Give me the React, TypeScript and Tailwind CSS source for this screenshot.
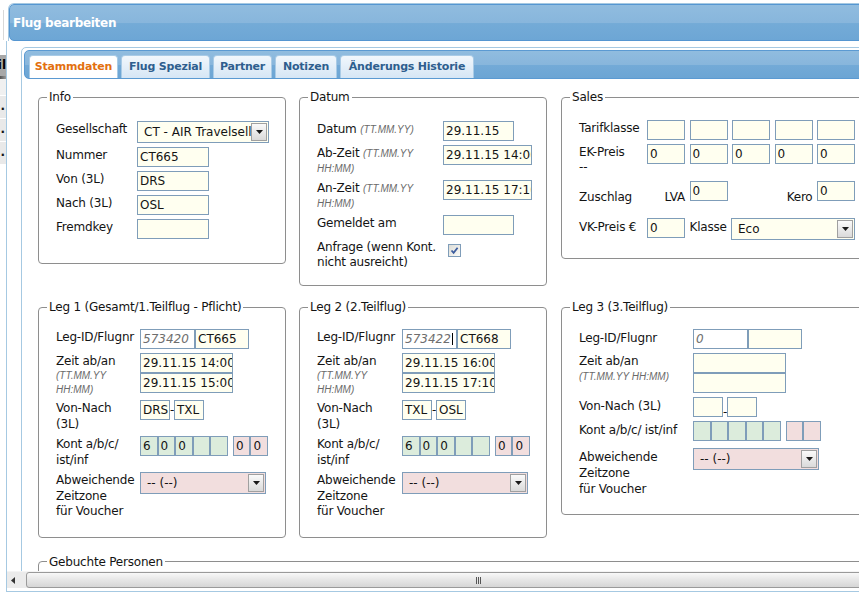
import React from "react";

const ivory = "bg-[#fffff0]";
const green = "bg-[#dcecdc]";
const rose = "bg-[#f2dede]";

function Field({ value = "", className = "" }: { value?: React.ReactNode; className?: string }) {
  return (
    <div
      className={`h-[20px] shrink-0 overflow-hidden whitespace-nowrap border border-[#7f9db9] px-[2px] leading-[18px] ${className}`}
    >
      {value}
    </div>
  );
}

function Dropdown({ value, className = "" }: { value: string; className?: string }) {
  return (
    <div className={`flex h-[22px] shrink-0 border border-[#7f9db9] ${className}`}>
      <div className="min-w-0 flex-1 overflow-hidden whitespace-nowrap pl-[6px] leading-[20px]">{value}</div>
      <div className="my-[1px] mr-[1px] flex w-[16px] shrink-0 items-center justify-center border border-[#a0a0a0] bg-[linear-gradient(to_bottom,#fafafa,#dadada)]">
        <svg width="7" height="4" viewBox="0 0 7 4">
          <path d="M0 0h7L3.5 4z" fill="#1a1a1a" />
        </svg>
      </div>
    </div>
  );
}

function Hint({ children }: { children: React.ReactNode }) {
  return (
    <span className="font-['Liberation_Sans',sans-serif] text-[10px] italic tracking-normal text-[#6a6a6a]">
      {children}
    </span>
  );
}

function Row({
  label,
  lw,
  lh = "leading-[15px]",
  className = "",
  children,
}: {
  label: React.ReactNode;
  lw: string;
  lh?: string;
  className?: string;
  children?: React.ReactNode;
}) {
  return (
    <div className={`flex items-start py-[2px] ${className}`}>
      <div className={`shrink-0 pt-[1px] tracking-[-0.2px] ${lw} ${lh}`}>{label}</div>
      {children}
    </div>
  );
}

function Box({ title, className = "", children }: { title: string; className?: string; children?: React.ReactNode }) {
  return (
    <fieldset className={`shrink-0 rounded-[4px] border border-[#8e8e8e] pl-[8px] ${className}`}>
      <legend className="px-[2px] leading-[16px] tracking-[-0.2px]">{title}</legend>
      {children}
    </fieldset>
  );
}

function Check() {
  return (
    <div className="ml-[5px] mt-[5px] flex h-[13px] w-[13px] items-center justify-center border border-[#7f9db9] bg-[linear-gradient(to_bottom_right,#dcdcd7,#fbfbf8)]">
      <svg width="9" height="9" viewBox="0 0 9 9">
        <path d="M1.5 4.5L3.6 6.8L7.6 1.8" fill="none" stroke="#3d5d9e" strokeWidth="1.8" />
      </svg>
    </div>
  );
}

function Kont({ vals }: { vals: string[] }) {
  return (
    <div className="flex">
      {vals.slice(0, 5).map((v, i) => (
        <Field key={i} value={v} className={`w-[17.6px] ${green}`} />
      ))}
      <div className="ml-[5px] flex">
        {vals.slice(5).map((v, i) => (
          <Field key={i} value={v} className={`w-[17.5px] ${rose}`} />
        ))}
      </div>
    </div>
  );
}

interface LegProps {
  title: string;
  lw: string;
  id: string;
  nr: string;
  ab?: string;
  an?: string;
  von?: string;
  nach?: string;
  kont: string[];
  compact?: boolean;
  caret?: boolean;
  className?: string;
}

function Leg({ title, lw, id, nr, ab = "", an = "", von = "", nach = "", kont, compact = false, caret = false, className = "" }: LegProps) {
  const lh = compact ? "leading-[16px]" : "leading-[15.5px]";
  return (
    <Box title={title} className={className}>
      <div className="pl-[9px] pt-[12px]">
        <Row lw={lw} lh={lh} label="Leg-ID/Flugnr">
          <div className="flex">
            <Field
              className="w-[55px] bg-white italic text-[#6e6e6e]"
              value={
                <>
                  {id}
                  {caret && <span className="ml-[1px] inline-block h-[12px] w-[1px] bg-black align-[-2px]" />}
                </>
              }
            />
            <Field className={`w-[54px] ${ivory}`} value={nr} />
          </div>
        </Row>
        <Row
          lw={lw}
          lh={lh}
          label={
            <>
              <div className="leading-[15px]">Zeit ab/an</div>
              <div className={compact ? "leading-[14px]" : "leading-[13.5px]"}>
                {compact ? (
                  <Hint>(TT.MM.YY HH:MM)</Hint>
                ) : (
                  <>
                    <Hint>(TT.MM.YY</Hint>
                    <br />
                    <Hint>HH:MM)</Hint>
                  </>
                )}
              </div>
            </>
          }
        >
          <div className="flex flex-col">
            <Field className={`w-[93px] ${ivory}`} value={ab} />
            <Field className={`w-[93px] ${ivory}`} value={an} />
          </div>
        </Row>
        <Row
          lw={lw}
          lh={lh}
          label={
            compact ? (
              "Von-Nach (3L)"
            ) : (
              <>
                Von-Nach
                <br />
                (3L)
              </>
            )
          }
        >
          <div className="flex">
            <Field className={`w-[30px] ${ivory}`} value={von} />
            <span className={`w-[4px] text-center ${compact ? "self-end leading-[10px]" : "leading-[20px]"}`}>-</span>
            <Field className={`w-[30px] ${ivory}`} value={nach} />
          </div>
        </Row>
        <Row
          lw={lw}
          lh={lh}
          label={
            compact ? (
              "Kont a/b/c/ ist/inf"
            ) : (
              <>
                Kont a/b/c/
                <br />
                ist/inf
              </>
            )
          }
        >
          <Kont vals={kont} />
        </Row>
        <Row
          lw={lw}
          lh={lh}
          className={compact ? "mt-[3px]" : ""}
          label={
            <>
              Abweichende
              <br />
              Zeitzone
              <br />
              für Voucher
            </>
          }
        >
          <Dropdown value="-- (--)" className={`w-[126px] ${rose}`} />
        </Row>
      </div>
    </Box>
  );
}

function Tab({ label, active = false, w }: { label: string; active?: boolean; w: string }) {
  return (
    <div
      className={`flex h-[23px] items-center justify-center rounded-t-[4px] border border-b-0 border-[#a9cbe6] text-[11px] font-bold tracking-[-0.2px] ${w} ${
        active
          ? "bg-white text-[#e3700f]"
          : "bg-[linear-gradient(to_bottom,#f1f7fc,#d6e6f5)] text-[#2e5e8e]"
      }`}
    >
      {label}
    </div>
  );
}

function PageEdge() {
  return (
    <div className="flex w-[6px] shrink-0 flex-col">
      <div className="ml-[3px] mt-[10px] h-[30px] border-l border-[#d8d8d8]" />
      <div className="mt-[15px] flex h-[21px] justify-end overflow-hidden whitespace-nowrap bg-[#a8a8a8] text-[12px] font-bold leading-[21px] text-black">
        il
      </div>
      <div className="h-[3px] bg-[linear-gradient(to_right,#555,#9a9a9a)]" />
      <div className="h-[16px] bg-[#f0f0f0]" />
      {[0, 1, 2].map((i) => (
        <div
          key={i}
          className="flex h-[23px] justify-end border-t border-white bg-[#e9e9e9] pr-[1px] text-[12px] font-bold leading-[20px]"
        >
          .
        </div>
      ))}
    </div>
  );
}

export default function App() {
  const lwInfo = "w-[81px]";
  const lwDatum = "w-[126px]";

  return (
    <div className="flex h-[595px] w-[859px] overflow-hidden bg-white font-['DejaVu_Sans',sans-serif] text-[12px] text-[#141414]">
      <PageEdge />
      <div className="flex w-[1000px] shrink-0 flex-col">
        {/* title */}
        <div className="ml-[2px] mt-[3px] rounded-t-[6px] border border-b-0 border-[#a6c9e2]">
          <div className="flex h-[37px] items-center rounded-[5px] border border-[#5596d1] bg-[linear-gradient(to_bottom,#90bcdf_0%,#88b6dc_50%,#74abd7_53%,#6da6d5_100%)] pl-[3px] text-[12px] font-bold tracking-[-0.3px] text-white">
            Flug bearbeiten
          </div>
        </div>

        {/* body */}
        <div className="flex flex-col border-b border-l border-[#a6c9e2]">
          <div className="h-[530px] overflow-hidden pl-[14px] pt-[6px]">
            <div className="w-[920px] rounded-[5px] border border-[#a6c9e2] p-[2px]">
              <div className="flex h-[29px] items-end gap-[3px] rounded-[5px] border border-[#5b9ad2] bg-[linear-gradient(to_bottom,#90bcdf_0%,#88b6dc_50%,#73aad7_53%,#6ca5d4_100%)] pl-[4px]">
                <Tab label="Stammdaten" active w="w-[89px]" />
                <Tab label="Flug Spezial" w="w-[89px]" />
                <Tab label="Partner" w="w-[59px]" />
                <Tab label="Notizen" w="w-[62px]" />
                <Tab label="Änderungs Historie" w="w-[134px]" />
              </div>

              <div className="px-[14px]">
                {/* row 1 */}
                <div className="mt-[10px] flex items-start gap-[13px]">
                  <Box title="Info" className="w-[248px] pb-[22px]">
                    <div className="pl-[9px] pt-[14px]">
                      <Row lw={lwInfo} label="Gesellschaft">
                        <Dropdown value="CT - AIR Travelseller" className={`w-[132px] ${ivory}`} />
                      </Row>
                      <Row lw={lwInfo} label="Nummer">
                        <Field value="CT665" className={`w-[72px] ${ivory}`} />
                      </Row>
                      <Row lw={lwInfo} label="Von (3L)">
                        <Field value="DRS" className={`w-[72px] ${ivory}`} />
                      </Row>
                      <Row lw={lwInfo} label="Nach (3L)">
                        <Field value="OSL" className={`w-[72px] ${ivory}`} />
                      </Row>
                      <Row lw={lwInfo} label="Fremdkey">
                        <Field className={`w-[72px] ${ivory}`} />
                      </Row>
                    </div>
                  </Box>

                  <Box title="Datum" className="w-[248px] pb-[13px]">
                    <div className="pl-[9px] pt-[14px]">
                      <Row
                        lw={lwDatum}
                        label={
                          <>
                            Datum <Hint>(TT.MM.YY)</Hint>
                          </>
                        }
                      >
                        <Field value="29.11.15" className={`w-[71px] ${ivory}`} />
                      </Row>
                      <Row
                        lw={lwDatum}
                        label={
                          <>
                            Ab-Zeit <Hint>(TT.MM.YY</Hint>
                            <br />
                            <Hint>HH:MM)</Hint>
                          </>
                        }
                      >
                        <Field value="29.11.15 14:00" className={`w-[89px] ${ivory}`} />
                      </Row>
                      <Row
                        lw={lwDatum}
                        label={
                          <>
                            An-Zeit <Hint>(TT.MM.YY</Hint>
                            <br />
                            <Hint>HH:MM)</Hint>
                          </>
                        }
                      >
                        <Field value="29.11.15 17:10" className={`w-[89px] ${ivory}`} />
                      </Row>
                      <Row lw={lwDatum} label="Gemeldet am">
                        <Field className={`w-[71px] ${ivory}`} />
                      </Row>
                      <Row
                        lw={lwDatum}
                        label={
                          <>
                            Anfrage (wenn Kont.
                            <br />
                            nicht ausreicht)
                          </>
                        }
                      >
                        <Check />
                      </Row>
                    </div>
                  </Box>

                  <Box title="Sales" className="ml-[1px] w-[330px] pb-[16px]">
                    <div className="pl-[9px] pt-[13px]">
                      <div className="flex items-start gap-[4.5px] py-[2px]">
                        <div className="w-[63.5px] shrink-0 pt-[1px] leading-[15px] tracking-[-0.2px]">Tarifklasse</div>
                        {[0, 1, 2, 3, 4].map((i) => (
                          <Field key={i} className={`w-[38px] ${ivory}`} />
                        ))}
                      </div>
                      <div className="flex items-start gap-[4.5px] py-[2px]">
                        <div className="w-[63.5px] shrink-0 pt-[1px] leading-[15px] tracking-[-0.2px]">
                          EK-Preis
                          <br />
                          --
                        </div>
                        {[0, 1, 2, 3, 4].map((i) => (
                          <Field key={i} value="0" className={`w-[38px] ${ivory}`} />
                        ))}
                      </div>
                      <div className="mt-[2px] flex items-end gap-[4.5px] py-[2px]">
                        <div className="mb-[-2px] w-[63.5px] shrink-0 leading-[12px] tracking-[-0.2px]">Zuschlag</div>
                        <div className="mb-[-2px] w-[38px] shrink-0 text-right leading-[12px] tracking-[-0.2px]">LVA</div>
                        <Field value="0" className={`w-[38px] ${ivory}`} />
                        <div className="w-[38px] shrink-0" />
                        <div className="mb-[-2px] w-[38px] shrink-0 text-right leading-[12px] tracking-[-0.2px]">Kero</div>
                        <Field value="0" className={`w-[38px] ${ivory}`} />
                      </div>
                      <div className="mt-[13px] flex items-start gap-[4.5px] py-[2px]">
                        <div className="w-[63.5px] shrink-0 pt-[2px] leading-[15px] tracking-[-0.2px]">VK-Preis €</div>
                        <Field value="0" className={`w-[38px] ${ivory}`} />
                        <div className="w-[38px] shrink-0 pt-[2px] leading-[15px] tracking-[-0.2px]">Klasse</div>
                        <Dropdown value="Eco" className={`ml-[-1px] h-[21px] w-[124px] ${ivory}`} />
                      </div>
                    </div>
                  </Box>
                </div>

                {/* row 2 */}
                <div className="mt-[13px] flex items-start gap-[13px]">
                  <Leg
                    title="Leg 1 (Gesamt/1.Teilflug - Pflicht)"
                    lw="w-[84px]"
                    id="573420"
                    nr="CT665"
                    ab="29.11.15 14:00"
                    an="29.11.15 15:00"
                    von="DRS"
                    nach="TXL"
                    kont={["6", "0", "0", "", "", "0", "0"]}
                    className="w-[248px] pb-[15px]"
                  />
                  <Leg
                    title="Leg 2 (2.Teilflug)"
                    lw="w-[85px]"
                    id="573422"
                    nr="CT668"
                    ab="29.11.15 16:00"
                    an="29.11.15 17:10"
                    von="TXL"
                    nach="OSL"
                    kont={["6", "0", "0", "", "", "0", "0"]}
                    caret
                    className="w-[248px] pb-[15px]"
                  />
                  <Leg
                    title="Leg 3 (3.Teilflug)"
                    lw="w-[114px]"
                    id="0"
                    nr=""
                    kont={["", "", "", "", "", "", ""]}
                    compact
                    className="ml-[1px] w-[330px] pb-[15px]"
                  />
                </div>

                <Box title="Gebuchte Personen" className="mt-[16px] h-[60px] w-[880px]" />
              </div>
            </div>
          </div>

          {/* horizontal scrollbar */}
          <div className="flex h-[17px] border-t border-[#f4f4f4] bg-[#ebebeb]">
            <div className="flex w-[17px] shrink-0 items-center pl-[4px]">
              <svg width="4" height="7" viewBox="0 0 4 7">
                <path d="M4 0v7L0 3.5z" fill="#333" />
              </svg>
            </div>
            <div className="ml-[2px] flex w-[904px] shrink-0 items-center justify-center rounded-[3px] border border-[#9a9a9a] bg-[linear-gradient(to_bottom,#f8f8f8,#e6e6e6_50%,#d6d6d6)]">
              <div className="flex gap-[1px]">
                <div className="h-[7px] w-[1px] bg-[#555]" />
                <div className="h-[7px] w-[1px] bg-[#555]" />
                <div className="h-[7px] w-[1px] bg-[#555]" />
              </div>
            </div>
          </div>
          <div className="h-[3px]" />
        </div>
      </div>
    </div>
  );
}
